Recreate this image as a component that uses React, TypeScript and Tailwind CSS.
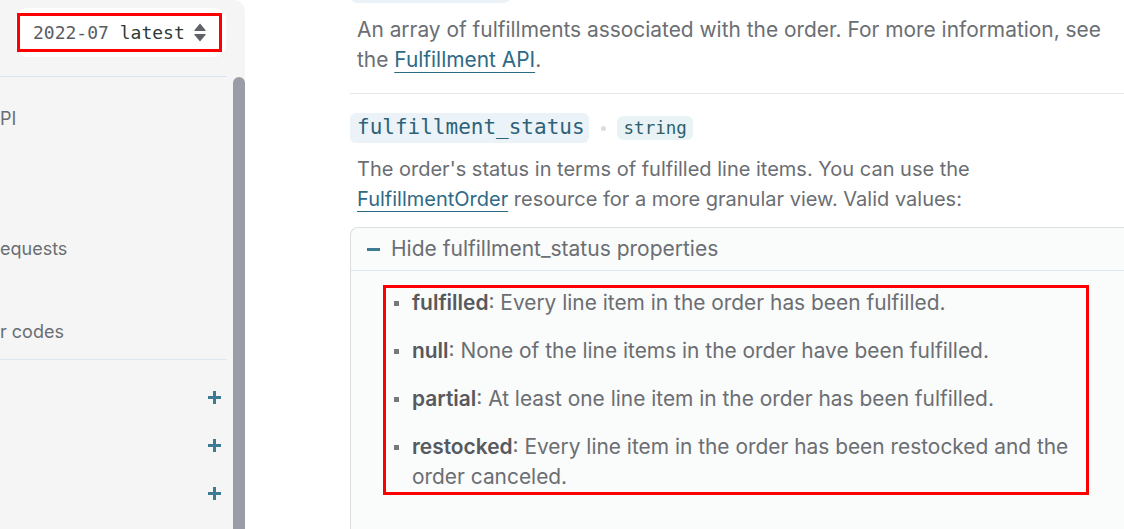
const Plus = () => (
  <svg width="13" height="13" viewBox="0 0 13 13" className="block">
    <rect x="5" y="0" width="3" height="13" fill="#3f7a95" />
    <rect x="0" y="5" width="13" height="3" fill="#3f7a95" />
  </svg>
);

const SortIcon = () => (
  <svg width="12" height="19" viewBox="0 0 12 19" className="block">
    <path d="M6 0.5 L11.5 7 Q12 8 11 8 L1 8 Q0 8 0.5 7 Z" fill="#5f6266" />
    <path d="M6 18.5 L11.5 12 Q12 11 11 11 L1 11 Q0 11 0.5 12 Z" fill="#5f6266" />
  </svg>
);

const values = [
  { key: "fulfilled", text: "Every line item in the order has been fulfilled." },
  { key: "null", text: "None of the line items in the order have been fulfilled." },
  { key: "partial", text: "At least one line item in the order has been fulfilled." },
  { key: "restocked", text: "Every line item in the order has been restocked and the order canceled." },
];

const Sidebar = () => {
  return (
    <aside className="flex w-[245px] shrink-0 bg-[#f5f5f5] rounded-tr-xl">
      <div className="flex flex-1 flex-col">
        <div className="ml-4 mt-2 h-[49px] w-[210px] rounded-xl bg-white">
          <div className="ml-[1px] mt-[5px] flex h-[39px] w-[205px] items-center gap-[9px] border-[3px] border-[#ff0000] pl-[13px] font-['DejaVu_Sans_Mono',monospace] text-[18px]">
            <span>
              <span className="text-[#595c5f]">2022-07</span>{" "}
              <span className="text-[#2b3a36]">latest</span>
            </span>
            <SortIcon />
          </div>
        </div>
        <div className="mr-[6px] mt-[19px] h-px bg-[#d9e7f3]" />

        <div className="flex flex-col text-[18px] text-[#6b6e72]">
          <div className="mt-[20px] flex h-[42px] items-center">PI</div>
          <div className="h-[88px]" />
          <div className="flex h-[42px] items-center">equests</div>
          <div className="h-[41px]" />
          <div className="flex h-[42px] items-center">r codes</div>
        </div>
        <div className="mr-[6px] mt-[7px] h-px bg-[#dfe7ee]" />

        <div className="flex flex-col pt-[13px]">
          {[0, 1, 2].map((i) => (
            <div key={i} className="flex h-[48px] items-center justify-end pr-[12px]">
              <Plus />
            </div>
          ))}
        </div>
      </div>
      <div className="mt-[77px] w-[12px] rounded-t-md bg-[#9a9da5]" />
    </aside>
  );
};

export default function App() {
  return (
    <div className="flex h-[529px] w-[1124px] overflow-hidden bg-white font-['Inter',sans-serif]">
      <Sidebar />

      <main className="min-w-0 flex-1 overflow-hidden pl-[105px]">
        <div className="w-[780px]">
          <div className="ml-[1px] mt-[-27px] h-[30px] w-[159px] rounded-md bg-[#ebf3f9]" />

          <p className="mt-[12px] w-[770px] px-[7px] text-[20.9px] leading-[30px] text-[#6b6e72]">
            An array of fulfillments associated with the order. For more information, see the{" "}
            <a className="text-[#2f6a85] underline decoration-1 underline-offset-[5px]">Fulfillment API</a>.
          </p>

          <div className="mt-[18px] h-px bg-[#e3e8ec]" />

          <div className="mt-[19px] flex items-center">
            <code className="flex h-[30px] items-center rounded-md bg-[#ebf3f9] pl-[7px] pr-[4px] font-['DejaVu_Sans_Mono',monospace] text-[21px] text-[#2d6278]">
              fulfillment_status
            </code>
            <span className="ml-[12px] h-[5px] w-[5px] rounded-full bg-[#d6dee4]" />
            <code className="ml-[11px] flex h-[24px] items-center rounded-md bg-[#e9f3f5] pl-[7px] pr-[6px] font-['DejaVu_Sans_Mono',monospace] text-[17.5px] text-[#2d5f6a]">
              string
            </code>
          </div>

          <p className="mt-[11px] px-[7px] text-[20px] leading-[30px] text-[#6b6e72]">
            The order's status in terms of fulfilled line items. You can use the{" "}
            <a className="text-[#2f6a85] underline decoration-1 underline-offset-[5px]">FulfillmentOrder</a>{" "}
            resource for a more granular view. Valid values:
          </p>

          <div className="mt-[13px] h-[400px] rounded-tl-lg border border-r-0 border-[#dcdfe2] bg-[#fafbfb]">
            <div className="flex h-[43px] items-center gap-[11px] border-b border-[#dce8f2] pl-[16px] text-[21px] text-[#6b6e72]">
              <span className="block h-[3px] w-[13px] bg-[#3f7a95]" />
              Hide fulfillment_status properties
            </div>

            <div className="pt-[14px]">
              <ul className="ml-[32px] flex w-[706px] flex-col gap-[18px] border-[3px] border-[#ff0000] pr-[6px] text-[20.9px] leading-[30px] text-[#6b6e72]">
                {values.map((v) => (
                  <li key={v.key} className="flex">
                    <span className="w-[26px] shrink-0">
                      <span className="ml-[8px] mt-[13px] block h-[5px] w-[5px] bg-[#77797c]" />
                    </span>
                    <span>
                      <strong className="font-semibold text-[#56595d]">{v.key}</strong>: {v.text}
                    </span>
                  </li>
                ))}
              </ul>
            </div>
          </div>
        </div>
      </main>
    </div>
  );
}
